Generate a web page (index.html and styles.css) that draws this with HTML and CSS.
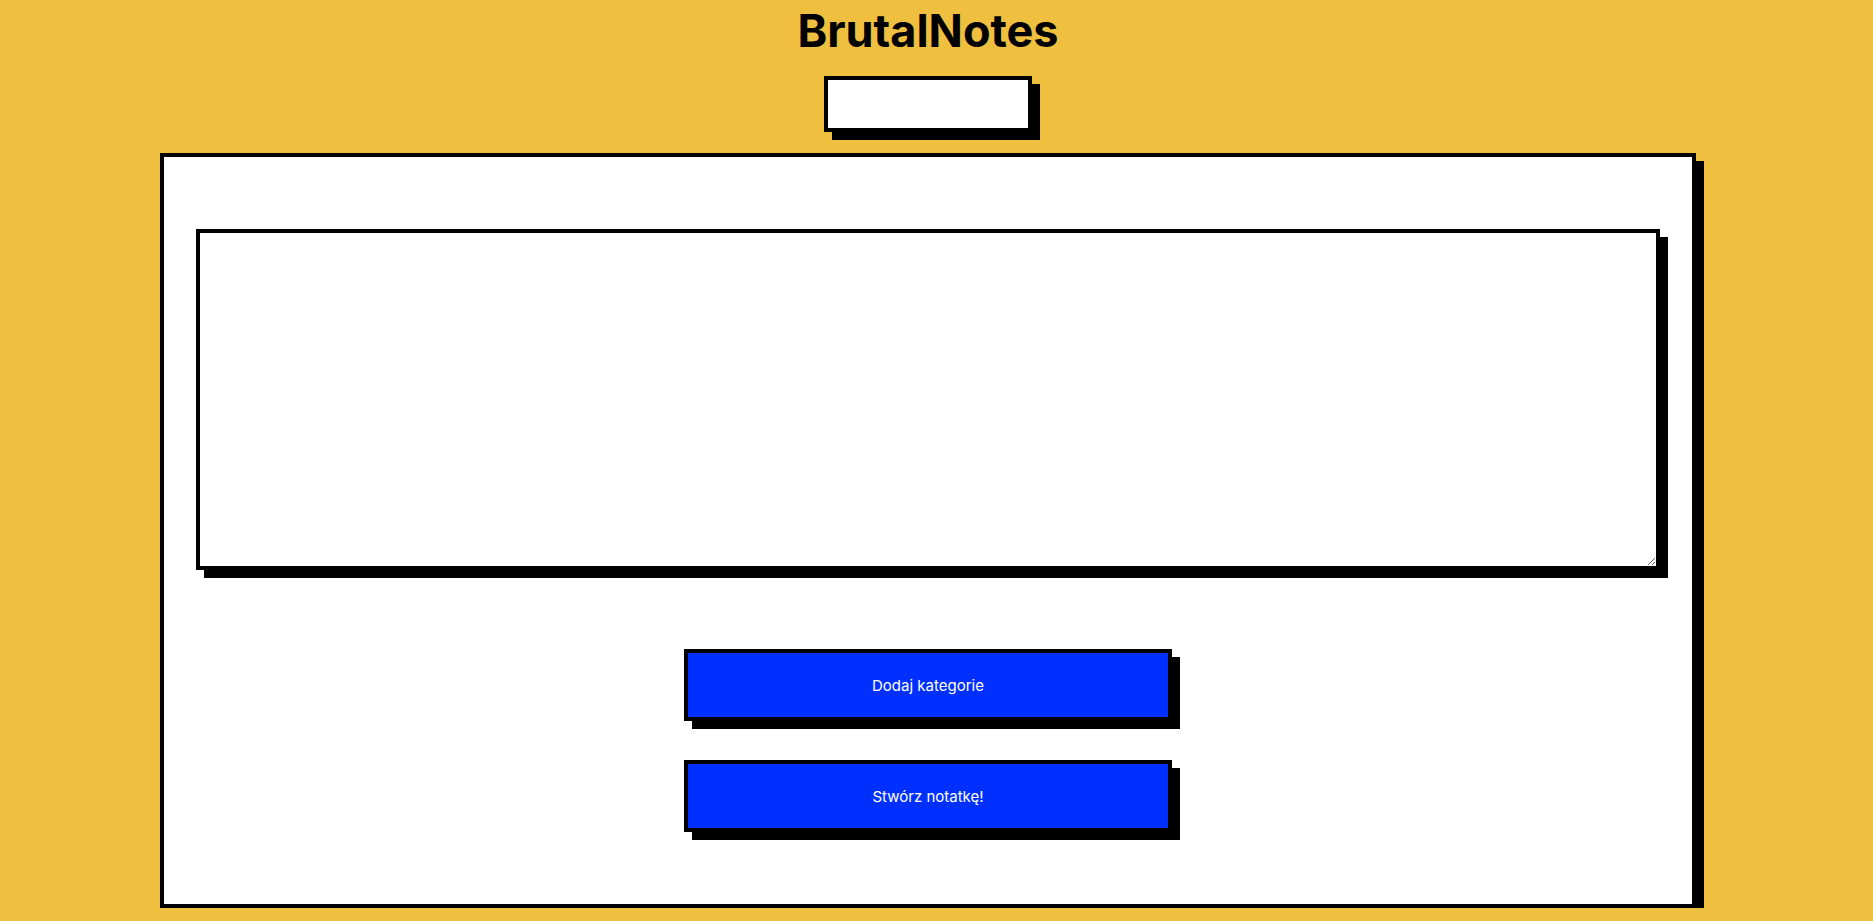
FILE: index.html
```html
<!DOCTYPE html>
<html lang="pl">
<head>
<meta charset="utf-8">
<title>BrutalNotes</title>
<link rel="stylesheet" href="styles.css">
</head>
<body>
<div class="page">
  <h1 class="title">BrutalNotes</h1>
  <input class="category-input" type="text">
  <main class="card">
    <textarea class="note-area"></textarea>
    <button class="btn btn-first" type="button">Dodaj kategorie</button>
    <button class="btn btn-second" type="button">Stwórz notatkę!</button>
  </main>
</div>
</body>
</html>
```

FILE: styles.css
```css
html, body {
  margin: 0;
  padding: 0;
  background: #efbf3f;
}

body {
  font-family: Inter, "Noto Sans", sans-serif;
  overflow: hidden;
}

.page {
  width: 1856px;
  display: flex;
  flex-direction: column;
  align-items: center;
}

.title {
  margin: 8px 0 0;
  font-size: 45px;
  line-height: 45px;
  font-weight: 700;
  color: #000;
  letter-spacing: 0;
}

.category-input {
  box-sizing: border-box;
  margin-top: 23px;
  width: 208px;
  height: 56px;
  border: 4px solid #000;
  background: #fff;
  box-shadow: 8px 8px 0 #000;
  outline: none;
  padding: 0 8px;
  font-family: inherit;
  font-size: 16px;
}

.card {
  box-sizing: border-box;
  margin-top: 21px;
  width: 1536px;
  height: 755px;
  border: 4px solid #000;
  background: #fff;
  box-shadow: 8px 8px 0 #000;
  padding: 32px;
  display: flex;
  flex-direction: column;
  align-items: center;
}

.note-area {
  box-sizing: border-box;
  margin-top: 40px;
  width: 1464px;
  height: 341px;
  border: 4px solid #000;
  background: #fff;
  box-shadow: 8px 8px 0 #000;
  outline: none;
  padding: 8px;
  font-family: inherit;
  font-size: 16px;
  flex: none;
}

.btn {
  box-sizing: border-box;
  width: 488px;
  height: 72px;
  border: 4px solid #000;
  background: #0030ff;
  color: #fff;
  box-shadow: 8px 8px 0 #000;
  font-family: inherit;
  font-size: 15px;
  font-weight: 400;
  cursor: pointer;
  flex: none;
  padding: 0;
}

.btn-first {
  margin-top: 79px;
}

.btn-second {
  margin-top: 39px;
}
```
